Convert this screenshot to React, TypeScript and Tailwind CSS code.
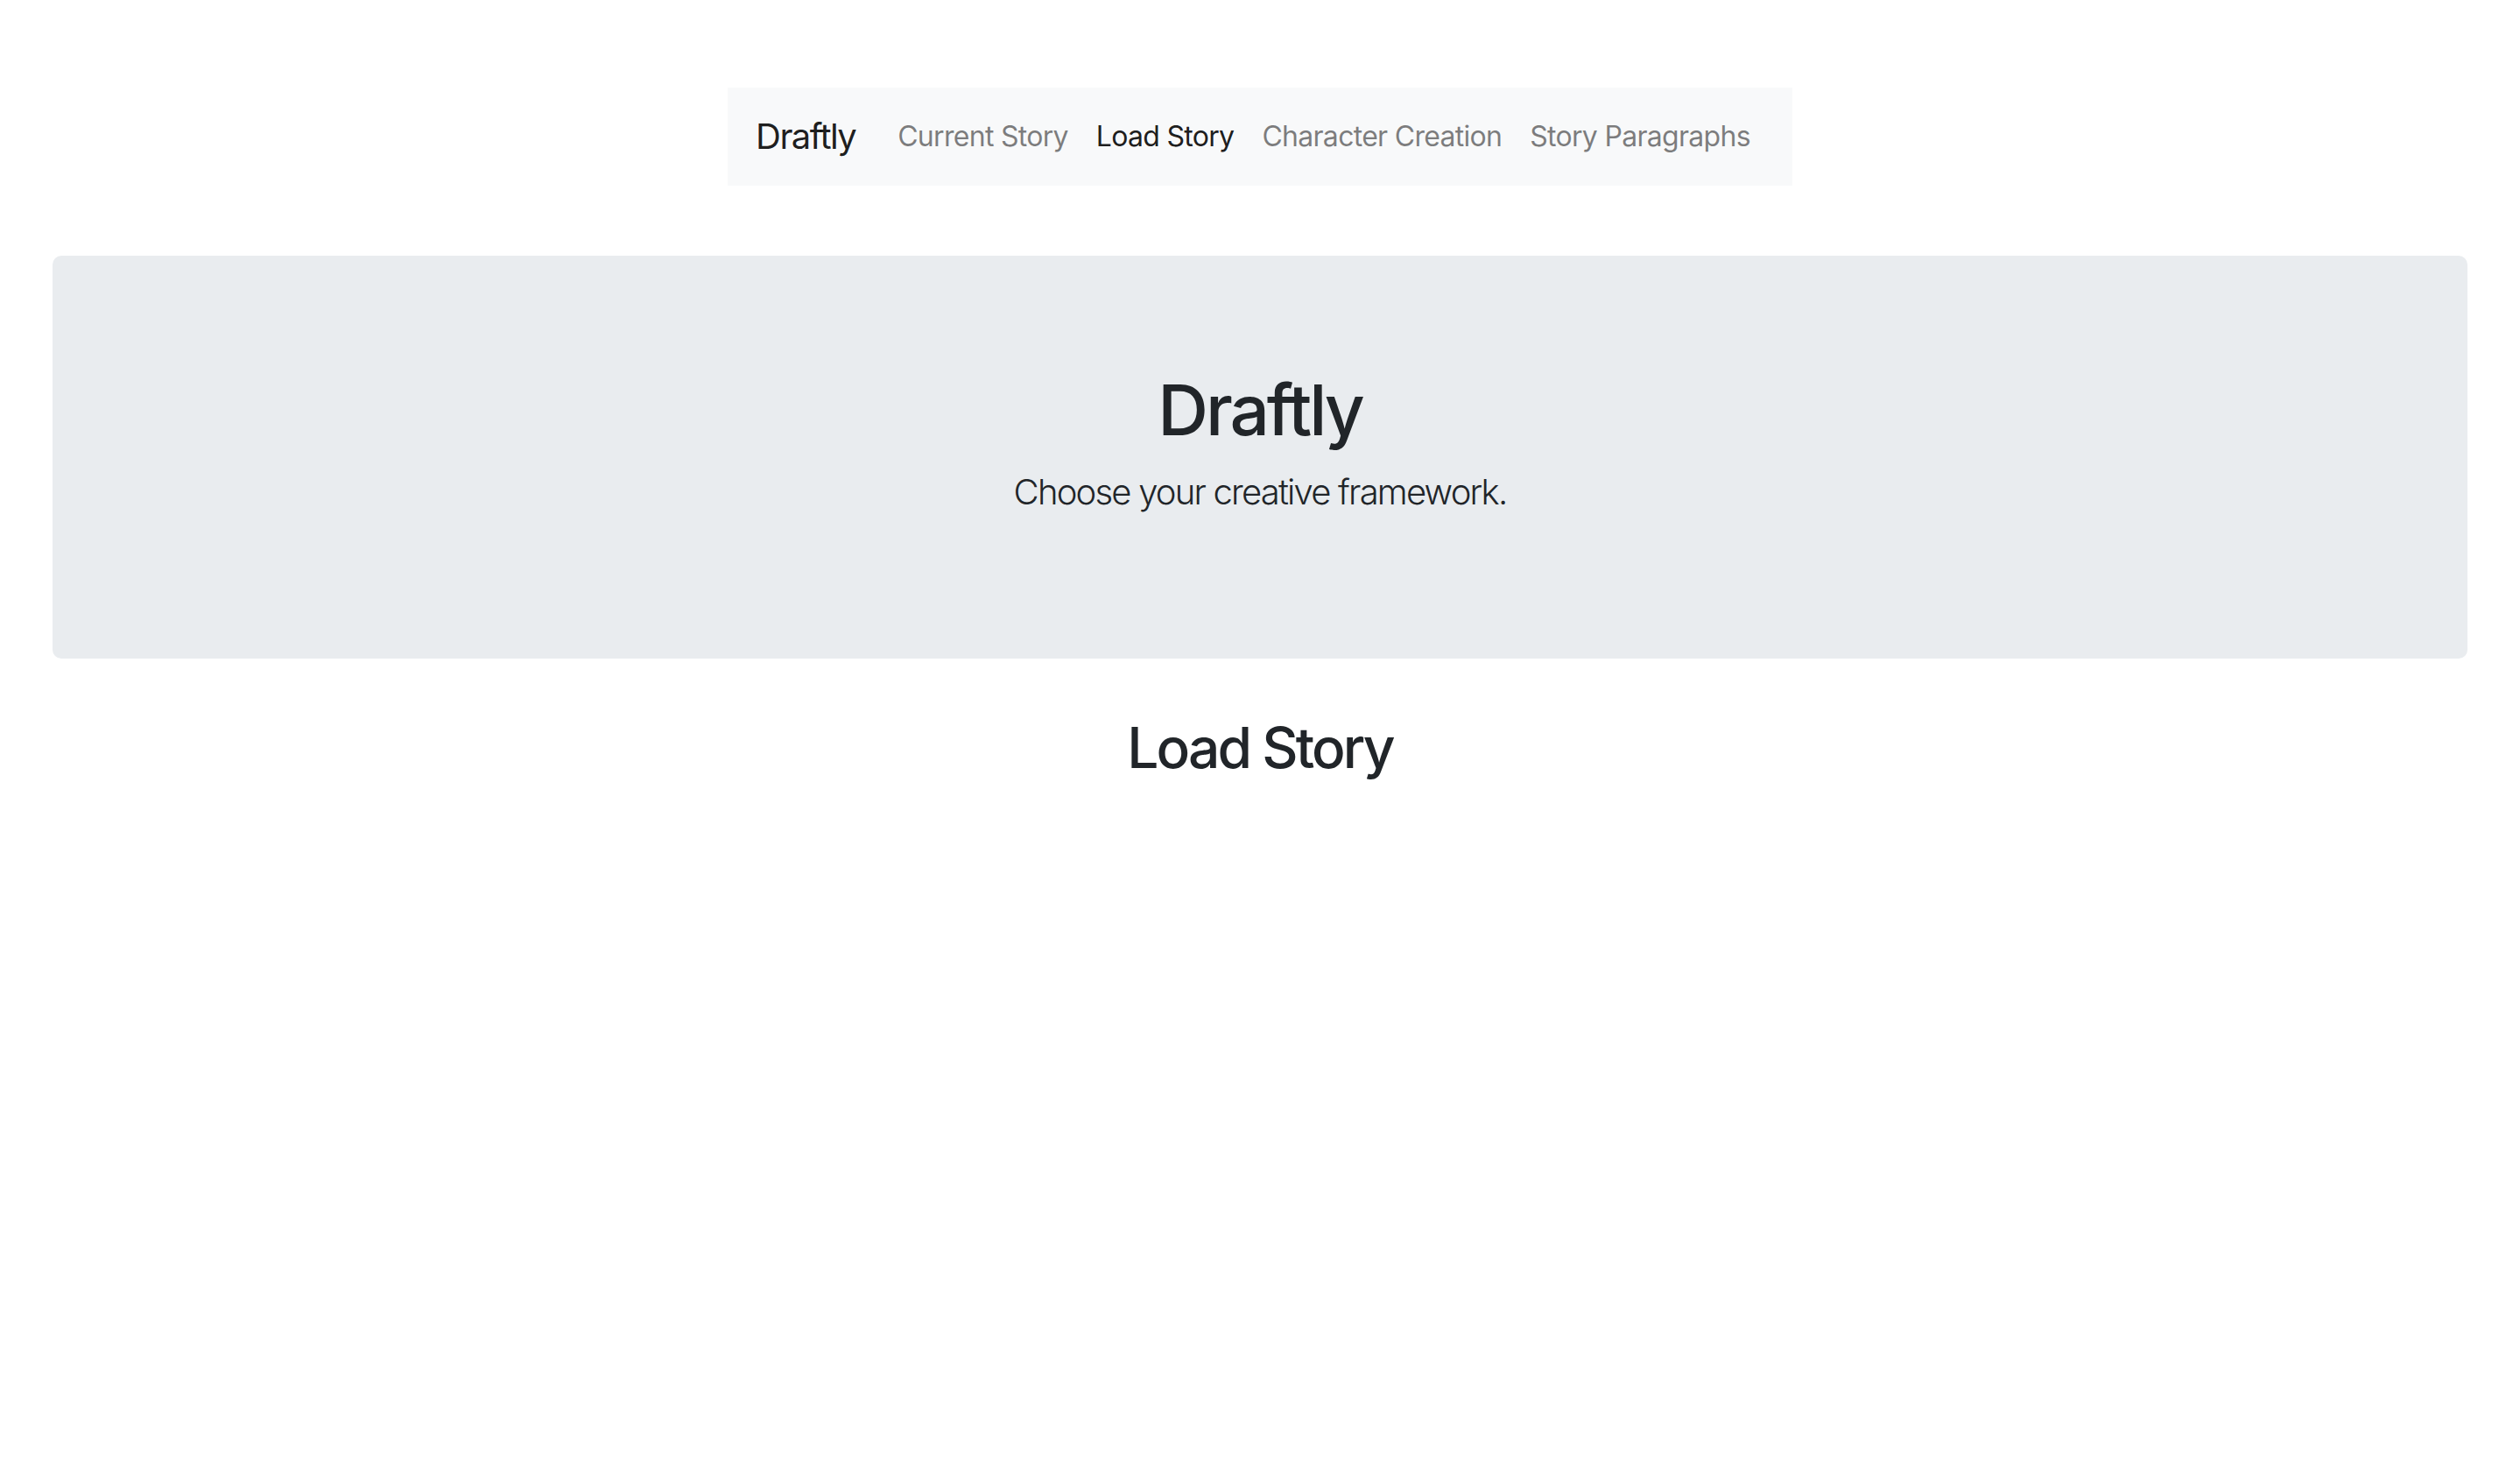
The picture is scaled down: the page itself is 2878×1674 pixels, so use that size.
import React from "react";

const links = [
  { label: "Current Story", active: false },
  { label: "Load Story", active: true },
  { label: "Character Creation", active: false },
  { label: "Story Paragraphs", active: false },
];

function Navbar() {
  return (
    <nav className="mx-auto flex w-fit items-center bg-[#f8f9fa] px-[32px] py-[16px]">
      <a className="mr-[32px] py-[10px] text-[40px] leading-[60px] tracking-[-0.04em] text-black/90">
        Draftly
      </a>
      <ul className="flex items-center">
        {links.map((l) => (
          <li key={l.label}>
            <a
              className={
                l.active
                  ? "block px-[16px] py-[16px] text-[32px] leading-[48px] tracking-[-0.022em] text-black/90"
                  : "block px-[16px] py-[16px] text-[32px] leading-[48px] tracking-[-0.022em] text-black/50"
              }
            >
              {l.label}
            </a>
          </li>
        ))}
      </ul>
    </nav>
  );
}

export default function App() {
  return (
    <div className="min-h-screen bg-white pt-[100px] font-['Inter',sans-serif] text-[#212529]">
      <Navbar />

      <div className="px-[60px] pt-[80px]">
        <div className="rounded-[10px] bg-[#e9ecef] px-[64px] py-[128px] text-center">
          <h1 className="mb-[16px] text-[80px] font-medium leading-[1.2] tracking-[-0.039em]">
            Draftly
          </h1>
          <p className="mb-[32px] text-[40px] font-light leading-[60px] tracking-[-0.045em]">
            Choose your creative framework.
          </p>
        </div>

        <h2 className="mt-[64px] text-center text-[64px] font-medium leading-[1.2] tracking-[-0.045em]">
          Load Story
        </h2>
      </div>
    </div>
  );
}
